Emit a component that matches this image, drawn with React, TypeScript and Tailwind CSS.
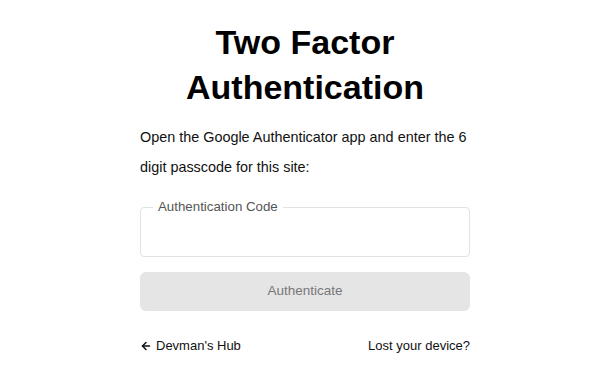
import { ArrowLeft } from 'lucide-react';

export default function App() {
  return (
    <div className="min-h-screen bg-white flex justify-center font-['Liberation_Sans',Arial,sans-serif] text-black">
      <div className="w-[330px] pt-[20px] flex flex-col">
        <h1 className="text-center font-bold text-[34px] leading-[45px]">
          Two Factor Authentication
        </h1>

        <p className="mt-[12px] text-[14.4px] leading-[30px] text-[#111]">
          Open the Google Authenticator app and enter the 6 digit passcode for this site:
        </p>

        <div className="relative mt-[25px] h-[50px] rounded-[4px] border border-[#e2e2e2]">
          <span className="absolute -top-[9px] left-[12px] bg-white px-[5px] text-[13.3px] leading-[16px] text-[#555]">
            Authentication Code
          </span>
          <input
            type="text"
            aria-label="Authentication Code"
            className="w-full h-full bg-transparent px-[16px] text-[15px] outline-none"
          />
        </div>

        <button
          disabled
          className="mt-[15px] h-[39px] w-full rounded-[6px] bg-[#e5e5e5] text-[13.5px] text-[#777]"
        >
          Authenticate
        </button>

        <div className="mt-[27px] flex items-center justify-between text-[13px] leading-[16px] text-[#111]">
          <a href="#" className="flex items-center gap-[4px]">
            <ArrowLeft size={12} strokeWidth={3} />
            Devman&apos;s Hub
          </a>
          <a href="#">Lost your device?</a>
        </div>
      </div>
    </div>
  );
}
